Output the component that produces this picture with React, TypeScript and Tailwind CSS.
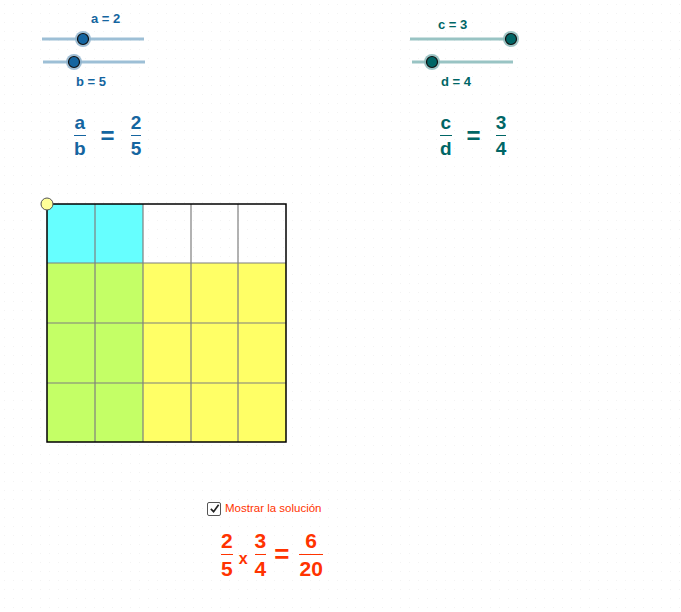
import React from 'react';

const BLUE = '#1565a0';
const TEAL = '#006666';
const RED = '#ff3300';

type SliderProps = { x1: number; x2: number; y: number; knob: number; color: string; track: string; halo: string };

function Slider({ x1, x2, y, knob, color, track, halo }: SliderProps) {
  return (
    <g>
      <line x1={x1} y1={y} x2={x2} y2={y} stroke={track} strokeWidth={3} />
      <circle cx={knob} cy={y} r={8} fill={halo} opacity={0.85} />
      <circle cx={knob} cy={y} r={5.5} fill={color} stroke="#111" strokeWidth={1.2} />
    </g>
  );
}

function Frac({ top, bottom, className, bar }: { top: string; bottom: string; className: string; bar: string }) {
  return (
    <div className={`flex flex-col items-center leading-none ${className}`}>
      <span>{top}</span>
      <span className="my-[3px] h-[1px] w-full" style={{ background: bar }} />
      <span>{bottom}</span>
    </div>
  );
}

const COLS = [47, 95, 143, 191, 238, 286];
const ROWS = [204, 263, 323, 383, 442];

export default function App() {
  const cells: React.ReactNode[] = [];
  for (let r = 0; r < 4; r++) {
    for (let c = 0; c < 5; c++) {
      let fill = 'none';
      if (r === 0 && c < 2) fill = '#66ffff';
      else if (r > 0 && c < 2) fill = '#c4ff66';
      else if (r > 0) fill = '#ffff66';
      cells.push(
        <rect key={`${r}-${c}`} x={COLS[c]} y={ROWS[r]} width={COLS[c + 1] - COLS[c]} height={ROWS[r + 1] - ROWS[r]} fill={fill} />
      );
    }
  }

  return (
    <div className="relative h-[612px] w-[681px] overflow-hidden bg-white bg-[radial-gradient(#f3f3f3_0.6px,transparent_0.8px)] bg-[size:9px_9px] font-['Liberation_Sans',Arial,sans-serif]">
      <svg className="absolute left-0 top-0" width={681} height={612}>
        <Slider x1={42} x2={144} y={39} knob={83} color={BLUE} track="#9dbfd6" halo="#8fb3cc" />
        <Slider x1={43} x2={145} y={62} knob={74} color={BLUE} track="#9dbfd6" halo="#8fb3cc" />
        <Slider x1={410} x2={512} y={39} knob={511} color={TEAL} track="#99c4c4" halo="#8cbaba" />
        <Slider x1={412} x2={513} y={62} knob={432} color={TEAL} track="#99c4c4" halo="#8cbaba" />

        {cells}
        {COLS.slice(1, 5).map((x) => (
          <line key={`v${x}`} x1={x} y1={204} x2={x} y2={442} stroke="#7f7f7f" strokeWidth={1.2} />
        ))}
        {ROWS.slice(1, 4).map((y) => (
          <line key={`h${y}`} x1={47} y1={y} x2={286} y2={y} stroke="#7f7f7f" strokeWidth={1.2} />
        ))}
        <rect x={47} y={204} width={239} height={238} fill="none" stroke="#000" strokeWidth={1.5} />
        <circle cx={47} cy={204} r={6} fill="#ffff99" stroke="#555" strokeWidth={1} />
      </svg>

      <div className="absolute left-[91px] top-[9px] text-[13px] font-bold" style={{ color: BLUE }}>a = 2</div>
      <div className="absolute left-[76px] top-[72px] text-[13px] font-bold" style={{ color: BLUE }}>b = 5</div>
      <div className="absolute left-[438px] top-[15px] text-[13px] font-bold" style={{ color: TEAL }}>c = 3</div>
      <div className="absolute left-[441px] top-[72px] text-[13px] font-bold" style={{ color: TEAL }}>d = 4</div>

      <div className="absolute left-[74px] top-[113px] flex items-center text-[19px] font-bold" style={{ color: BLUE }}>
        <Frac top="a" bottom="b" className="" bar={BLUE} />
        <span className="ml-[15px] text-[24px]">=</span>
        <Frac top="2" bottom="5" className="ml-[16px]" bar={BLUE} />
      </div>
      <div className="absolute left-[440px] top-[113px] flex items-center text-[19px] font-bold" style={{ color: TEAL }}>
        <Frac top="c" bottom="d" className="" bar={TEAL} />
        <span className="ml-[15px] text-[24px]">=</span>
        <Frac top="3" bottom="4" className="ml-[15px]" bar={TEAL} />
      </div>

      <label className="absolute left-[207px] top-[500px] flex items-center gap-[4px] text-[11.5px]" style={{ color: RED }}>
        <span className="flex h-[14px] w-[14px] items-center justify-center rounded-[2px] border-[1.5px] border-[#555] bg-white">
          <svg width="11" height="11" viewBox="0 0 12 12">
            <path d="M2 6.5 L5 9.5 L10.5 2" fill="none" stroke="#222" strokeWidth={1.8} />
          </svg>
        </span>
        Mostrar la solución
      </label>

      <div className="absolute left-[221px] top-[530px] flex items-center text-[21px] font-bold" style={{ color: RED }}>
        <Frac top="2" bottom="5" className="" bar={RED} />
        <span className="ml-[6px] mr-[7px] mt-[8px] text-[16px]">x</span>
        <Frac top="3" bottom="4" className="" bar={RED} />
        <span className="ml-[8px] mr-[10px] text-[26px]">=</span>
        <Frac top="6" bottom="20" className="" bar={RED} />
      </div>
    </div>
  );
}
